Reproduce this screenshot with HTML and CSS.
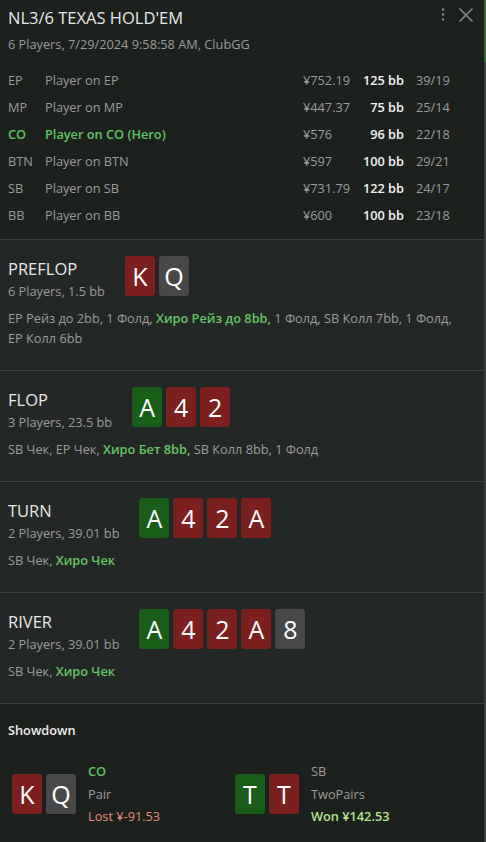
FILE: index.html
```html
<!DOCTYPE html>
<html>
<head>
<meta charset="utf-8">
<link rel="stylesheet" href="styles.css">
</head>
<body>
<div class="app">
  <main class="content">
    <header class="header">
      <div class="title-row">
        <h1 class="title">NL3/6 TEXAS HOLD'EM</h1>
        <div class="tools">
          <svg class="kebab" width="6" height="16" viewBox="0 0 6 16"><circle cx="3" cy="2.5" r="1.2"/><circle cx="3" cy="7.5" r="1.2"/><circle cx="3" cy="12.5" r="1.2"/></svg>
          <svg class="close" width="16" height="16" viewBox="0 0 16 16"><path d="M1.5 1.5 L14.5 14.5 M14.5 1.5 L1.5 14.5"/></svg>
        </div>
      </div>
      <div class="subtitle">6 Players, 7/29/2024 9:58:58 AM, ClubGG</div>
      <div class="players">
        <div class="prow"><span class="pos">EP</span><span class="name">Player on EP</span><span class="amt">¥752.19</span><span class="bb">125 bb</span><span class="stat">39/19</span></div>
        <div class="prow"><span class="pos">MP</span><span class="name">Player on MP</span><span class="amt">¥447.37</span><span class="bb">75 bb</span><span class="stat">25/14</span></div>
        <div class="prow hero"><span class="pos">CO</span><span class="name">Player on CO (Hero)</span><span class="amt">¥576</span><span class="bb">96 bb</span><span class="stat">22/18</span></div>
        <div class="prow"><span class="pos">BTN</span><span class="name">Player on BTN</span><span class="amt">¥597</span><span class="bb">100 bb</span><span class="stat">29/21</span></div>
        <div class="prow"><span class="pos">SB</span><span class="name">Player on SB</span><span class="amt">¥731.79</span><span class="bb">122 bb</span><span class="stat">24/17</span></div>
        <div class="prow"><span class="pos">BB</span><span class="name">Player on BB</span><span class="amt">¥600</span><span class="bb">100 bb</span><span class="stat">23/18</span></div>
      </div>
    </header>

    <section class="street">
      <div class="street-head">
        <div class="street-info">
          <div class="street-name">PREFLOP</div>
          <div class="street-sub">6 Players, 1.5 bb</div>
        </div>
        <div class="cards"><span class="card red">K</span><span class="card gray">Q</span></div>
      </div>
      <p class="actions"><span>EP Рейз до 2bb, 1 Фолд,</span> <span class="hero-act">Хиро Рейз до 8bb,</span> <span>1 Фолд, SB Колл 7bb, 1 Фолд,</span> <span>EP Колл 6bb</span></p>
    </section>

    <section class="street">
      <div class="street-head">
        <div class="street-info">
          <div class="street-name">FLOP</div>
          <div class="street-sub">3 Players, 23.5 bb</div>
        </div>
        <div class="cards"><span class="card green">A</span><span class="card red">4</span><span class="card red">2</span></div>
      </div>
      <p class="actions">SB Чек, EP Чек, <span class="hero-act">Хиро Бет 8bb,</span> SB Колл 8bb, 1 Фолд</p>
    </section>

    <section class="street">
      <div class="street-head">
        <div class="street-info">
          <div class="street-name">TURN</div>
          <div class="street-sub">2 Players, 39.01 bb</div>
        </div>
        <div class="cards"><span class="card green">A</span><span class="card red">4</span><span class="card red">2</span><span class="card red">A</span></div>
      </div>
      <p class="actions">SB Чек, <span class="hero-act">Хиро Чек</span></p>
    </section>

    <section class="street">
      <div class="street-head">
        <div class="street-info">
          <div class="street-name">RIVER</div>
          <div class="street-sub">2 Players, 39.01 bb</div>
        </div>
        <div class="cards"><span class="card green">A</span><span class="card red">4</span><span class="card red">2</span><span class="card red">A</span><span class="card gray">8</span></div>
      </div>
      <p class="actions">SB Чек, <span class="hero-act">Хиро Чек</span></p>
    </section>

    <section class="showdown">
      <div class="sd-title">Showdown</div>
      <div class="sd-players">
        <div class="sd-player">
          <div class="cards"><span class="card red">K</span><span class="card gray">Q</span></div>
          <div class="sd-info">
            <div class="sd-pos hero-pos">CO</div>
            <div class="sd-hand">Pair</div>
            <div class="sd-result lost">Lost ¥-91.53</div>
          </div>
        </div>
        <div class="sd-player">
          <div class="cards"><span class="card green">T</span><span class="card red">T</span></div>
          <div class="sd-info">
            <div class="sd-pos">SB</div>
            <div class="sd-hand">TwoPairs</div>
            <div class="sd-result won">Won ¥142.53</div>
          </div>
        </div>
      </div>
    </section>
  </main>
  <div class="track"><div class="thumb"></div></div>
</div>
</body>
</html>
```

FILE: styles.css
```css
* { box-sizing: border-box; }
html, body { margin: 0; padding: 0; }
body {
  background: #1c211e;
  font-family: "Open Sans", "Noto Sans", sans-serif;
  color: #9b9b9b;
  font-size: 12.75px;
}
.app {
  display: flex;
  width: 486px;
  height: 842px;
  overflow: hidden;
}
.content {
  width: 484px;
  display: flex;
  flex-direction: column;
}
.track {
  width: 2px;
  background: #3a3e3c;
}
.thumb {
  height: 62px;
  background: #2f6b32;
}
.header {
  background: #1c211e;
  padding: 7px 8px 11px 8px;
  border-bottom: 1px solid #3b3f3d;
}
.title-row {
  display: flex;
  justify-content: space-between;
  align-items: flex-start;
}
.title {
  margin: 0;
  font-weight: 400;
  font-size: 16.5px;
  line-height: 22px;
  color: #e8e8e8;
}
.tools {
  display: flex;
  gap: 12px;
  padding-right: 2px;
}
.kebab { fill: #8a8a8a; }
.close { stroke: #8a8a8a; stroke-width: 1.5; fill: none; }
.subtitle {
  margin-top: 6px;
  line-height: 18px;
  font-size: 12.75px;
  color: #9b9b9b;
}
.players {
  margin-top: 13px;
  display: flex;
  flex-direction: column;
}
.prow {
  display: grid;
  grid-template-columns: 37px 258px 55px 46px auto;
  height: 27px;
  align-items: center;
  font-size: 12.75px;
  color: #9b9b9b;
}
.prow .bb {
  text-align: right;
  color: #f2f2f2;
  font-weight: 600;
}
.prow .stat { padding-left: 12px; }
.prow.hero .pos, .prow.hero .name {
  color: #63c463;
  font-weight: 600;
}
.street {
  background: #232826;
  padding: 16px 8px 22px 8px;
  border-bottom: 1px solid #3b3f3d;
}
.street-head {
  display: flex;
  align-items: flex-start;
  gap: 20px;
}
.street-info { margin-top: 2px; }
.street-name {
  font-size: 16.5px;
  line-height: 22px;
  color: #e8e8e8;
}
.street-sub {
  font-size: 12.75px;
  line-height: 22px;
  color: #9b9b9b;
}
.cards {
  display: flex;
  gap: 4px;
}
.card {
  width: 30px;
  height: 40px;
  border-radius: 3px;
  color: #ffffff;
  font-size: 25px;
  line-height: 40px;
  text-align: center;
}
.card.red { background: #7b1f1f; }
.card.gray { background: #484848; }
.card.green { background: #185e18; }
.actions {
  margin: 6px 0 0 0;
  padding-right: 22px;
  font-size: 12.75px;
  line-height: 20px;
  color: #9b9b9b;
}
.hero-act {
  color: #63c463;
  font-weight: 600;
}
.showdown {
  flex: 1;
  background: #1c211e;
  padding: 17px 8px 0 8px;
}
.sd-title {
  font-size: 12.75px;
  line-height: 18px;
  font-weight: 600;
  color: #ececec;
}
.sd-players {
  display: flex;
  margin-top: 21px;
}
.sd-player {
  width: 223px;
  padding-left: 4px;
  display: flex;
  align-items: center;
  gap: 12px;
}
.sd-info {
  display: flex;
  flex-direction: column;
}
.sd-info div {
  line-height: 22.5px;
  font-size: 12.75px;
}
.sd-pos { color: #9b9b9b; }
.sd-pos.hero-pos { color: #63c463; font-weight: 600; }
.sd-hand { color: #9b9b9b; }
.lost { color: #e8887c; }
.won { color: #b7e38c; font-weight: 600; }
```
